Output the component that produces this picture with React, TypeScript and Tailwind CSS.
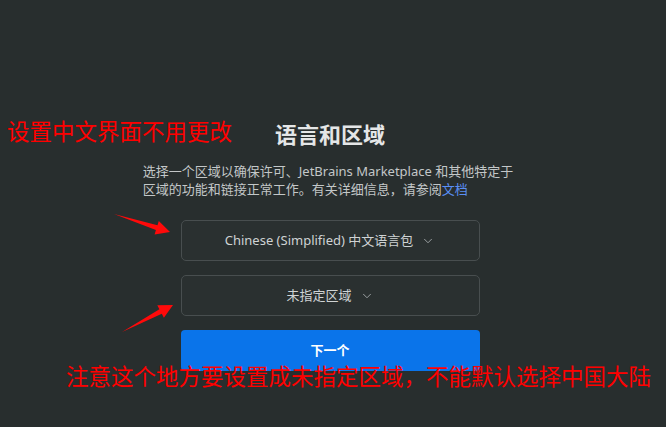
import { ChevronDown } from "lucide-react";

const FONT = { fontFamily: '"Noto Sans", "Noto Sans CJK SC", sans-serif' };

function Select({ label }: { label: string }) {
  return (
    <button className="flex h-[41px] w-full items-center justify-center gap-2 rounded-[5px] border border-[#484e4f] bg-[#2a3030] text-[13px] text-[#cfd3d4]">
      <span>{label}</span>
      <ChevronDown size={14} strokeWidth={1.5} className="text-[#a9aeb0]" />
    </button>
  );
}

export default function App() {
  return (
    <div className="relative h-[427px] w-[666px] overflow-hidden bg-[#282e2e]" style={FONT}>
      <div className="flex flex-col items-center pr-[6px] pt-[120px]">
        <h1 className="text-[22px] font-bold leading-[28px] text-[#e4e6e7]">语言和区域</h1>
        <p className="mr-[4px] mt-[14px] text-[13px] leading-[18px] text-[#c3c7c8]">
          选择一个区域以确保许可、JetBrains Marketplace 和其他特定于
          <br />
          区域的功能和链接正常工作。有关详细信息，请参阅<span className="text-[#5a8ff5]">文档</span>
        </p>
        <div className="mt-[22px] flex w-[299px] flex-col gap-[14px]">
          <Select label="Chinese (Simplified) 中文语言包" />
          <Select label="未指定区域" />
          <button className="h-[41px] w-full rounded-[4px] bg-[#0a74ea] text-[13px] font-bold text-white">
            下一个
          </button>
        </div>
      </div>

      <p className="absolute left-[7px] top-[118px] text-[22.5px] leading-[28px] text-[#ff0000]">设置中文界面不用更改</p>
      <p className="absolute left-[66px] top-[363px] whitespace-nowrap text-[22.5px] leading-[28px] text-[#ff0000]">
        注意这个地方要设置成未指定区域，不能默认选择中国大陆
      </p>

      <svg className="pointer-events-none absolute left-0 top-0" width="666" height="427">
        <polygon fill="#ff0a0a" points="114,214 157.5,225.3 158.8,221 170,232 154.6,234.4 155.9,230.1" />
        <polygon fill="#ff0a0a" points="122,332 159.4,309.3 157.3,305.3 173,305 163.9,317.7 161.8,313.7" />
      </svg>
    </div>
  );
}
